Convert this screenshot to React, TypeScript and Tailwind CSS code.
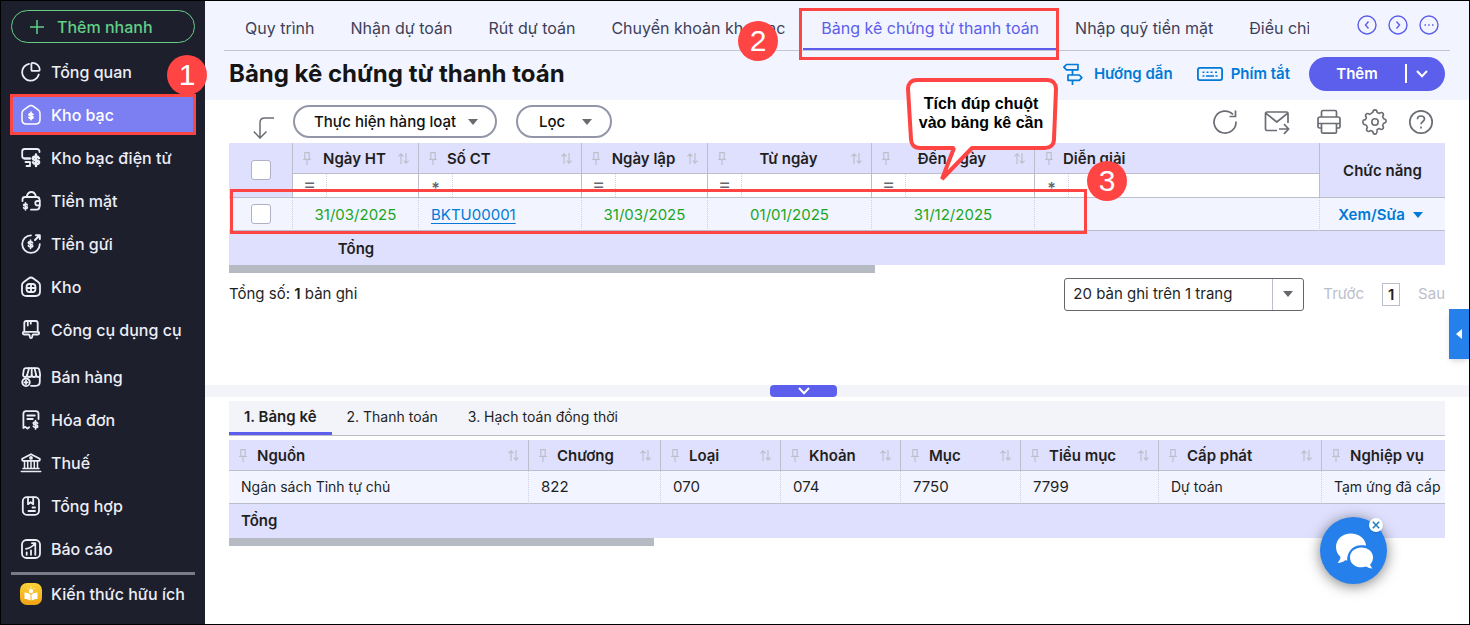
import React from 'react';
import clsx from 'clsx';

interface Column {
    label: string;
    width?: string;
    center?: boolean;
    operator?: string;
    noSort?: boolean;
}

const tabs = [
    'Quy trình',
    'Nhận dự toán',
    'Rút dự toán',
    'Chuyển khoản kho bạc',
    'Bảng kê chứng từ thanh toán',
    'Nhập quỹ tiền mặt',
    'Điều chỉnh',
];

const columns: Column[] = [
    { label: 'Ngày HT', width: 'w-[126px]', center: true, operator: '=' },
    { label: 'Số CT', width: 'w-[163px]', operator: '*' },
    { label: 'Ngày lập', width: 'w-[126px]', center: true, operator: '=' },
    { label: 'Từ ngày', width: 'w-[164px]', center: true, operator: '=' },
    { label: 'Đến ngày', width: 'w-[163px]', center: true, operator: '=' },
    { label: 'Diễn giải', operator: '*', noSort: true },
];

const detailTabs = ['1. Bảng kê', '2. Thanh toán', '3. Hạch toán đồng thời'];

const detailColumns: (Column & { value: string; numeric?: boolean })[] = [
    { label: 'Nguồn', width: 'w-[300px]', value: 'Ngân sách Tỉnh tự chủ' },
    { label: 'Chương', width: 'w-[132px]', value: '822', numeric: true },
    { label: 'Loại', width: 'w-[120px]', value: '070', numeric: true },
    { label: 'Khoản', width: 'w-[120px]', value: '074', numeric: true },
    { label: 'Mục', width: 'w-[120px]', value: '7750', numeric: true },
    { label: 'Tiểu mục', width: 'w-[138px]', value: '7799', numeric: true },
    { label: 'Cấp phát', width: 'w-[163px]', value: 'Dự toán' },
    { label: 'Nghiệp vụ', noSort: true, value: 'Tạm ứng đã cấp' },
];

/* ---------- sidebar icons, all on a 20x20 grid ---------- */

const MenuIcon = ({ children }: { children: React.ReactNode }) => (
    <svg
        viewBox="0 0 20 20"
        className="w-5 h-5 shrink-0 overflow-visible"
        fill="none"
        stroke="currentColor"
        strokeWidth="1.8"
        strokeLinecap="round"
        strokeLinejoin="round"
    >
        {children}
    </svg>
);

// dollar sign centred on 0,0
const Dollar = ({ x, y, s = 1 }: { x: number; y: number; s?: number }) => (
    <g transform={`translate(${x} ${y}) scale(${s})`}>
        <path d="M2.2-1.6C1.8-2.5 1-2.8 0-2.8c-1.3 0-2.3.5-2.3 1.4C-2.3.5 2.3-.5 2.3 1.4c0 .9-1 1.4-2.3 1.4-1 0-1.9-.4-2.3-1.3M0-4.3v8.6" />
    </g>
);

const menuGroups = [
    [
        {
            label: 'Tổng quan',
            icon: (
                <>
                    <path d="M8 1.8A8.500 8.500 0 1 0 17.800 12.500" />
                    <path d="M11.300.8a.9.9 0 0 0-.9.9v6.200c0 .6.4 1 1 1h6.300c.6 0 1-.4 1-.9 0-4.200-3.200-7.200-7.400-7.200z" />
                </>
            ),
        },
        {
            label: 'Kho bạc',
            active: true,
            icon: (
                <>
                    <path d="M1 8.300c0-1.500.6-2.600 1.800-3.400l4.800-3.500c1.500-1.100 3.300-1.100 4.800 0l4.800 3.500C18.400 5.700 19 6.800 19 8.300v6.200c0 2.800-1.700 4.500-4.500 4.500h-9C2.700 19 1 17.300 1 14.500z" strokeWidth="1.500" />
                    <Dollar x={10} y={11} s={0.9} />
                </>
            ),
        },
        {
            label: 'Kho bạc điện tử',
            icon: (
                <>
                    <path d="M18.500 4V3.500c0-1.500-1-2.500-2.500-2.500H3.700C2.200 1 1.200 2 1.200 3.500V8c0 1.500 1 2.500 2.500 2.500h5.800" />
                    <path d="M3.500 10.500h5M4.500 14h4.500v4H5.500" />
                    <Dollar x={15} y={12.300} s={1.350} />
                </>
            ),
        },
        {
            label: 'Tiền mặt',
            icon: (
                <>
                    <path d="M1.500 10V8.500c0-1.500 1-2.500 2.500-2.500h11.500c1.500 0 3 1 3 2.500v1.300M18.500 14.500v1c0 1.800-1.200 3.200-3 3.200H10" />
                    <path d="M5.500 5.800c1-3 2.500-4.800 4.800-4.800 2.300 0 4 1.800 4.700 4.800" />
                    <path d="M18.800 10h-2.300a2.200 2.200 0 0 0 0 4.400h2.300z" />
                    <Dollar x={4.500} y={15.300} s={0.85} />
                </>
            ),
        },
        {
            label: 'Tiền gửi',
            icon: (
                <>
                    <path d="M10 1.300a8.800 8.800 0 1 0 8.800 8.800" />
                    <path d="M14 6l4.500-4.500M15 1.200h3.800V5" strokeWidth="2" />
                    <Dollar x={9.500} y={10.300} s={0.95} />
                </>
            ),
        },
        {
            label: 'Kho',
            icon: (
                <>
                    <path d="M1 8.300c0-1.500.6-2.600 1.800-3.400l4.800-3.500c1.500-1.100 3.300-1.100 4.800 0l4.800 3.500C18.400 5.700 19 6.800 19 8.300v6.200c0 2.800-1.700 4.500-4.500 4.500h-9C2.700 19 1 17.300 1 14.500z" />
                    <rect x="5.600" y="7" width="8.800" height="8" rx="2.800" />
                    <path d="M10 7v8M5.600 11h8.800" />
                </>
            ),
        },
        {
            label: 'Công cụ dụng cụ',
            icon: (
                <>
                    <path d="M3.300 11.500V3c0-1.300.8-2 2-2h9.400c1.200 0 2 .7 2 2v8.500" />
                    <path d="M3 11.800h14c1 0 1.200.5 1.200 1.300 0 .9-.4 1.400-1.300 1.400h-4.400c-.8 0-1 .3-1.100 1-.1 1.300-.3 2.700-1.400 2.700s-1.300-1.400-1.400-2.700c-.1-.7-.3-1-1.100-1H3.100c-.9 0-1.300-.5-1.300-1.400 0-.8.200-1.300 1.200-1.300z" />
                    <path d="M6.800 1.200v4.300M9.800 1.200v2.500" />
                </>
            ),
        },
    ],
    [
        {
            label: 'Bán hàng',
            icon: (
                <>
                    <path d="M5 1.200h11c1.400 0 2.200.8 2.400 2.200l.7 4c.2 1.600-.6 2.600-1.900 2.600-1.200 0-2-.8-2-2 0 1.200-.9 2-2.200 2s-2.300-.8-2.300-2c0 1.200-1 2-2.300 2S6 9.200 6 8c0 1.200-.8 2-2 2-1.300 0-2.100-1-1.900-2.600l.6-4C2.900 2 3.700 1.200 5 1.200z" />
                    <path d="M8 1.200L6.200 8M10.700 1.200V8M13.500 1.200L15.200 8" />
                    <path d="M18.800 9.500v5.300c0 2.500-1.500 4-4 4H10" />
                    <circle cx="5" cy="15.300" r="3.800" />
                    <path d="M5 13.600v3.400M3.300 15.300h3.400" />
                </>
            ),
        },
        {
            label: 'Hóa đơn',
            icon: (
                <>
                    <path d="M17.500 9V3.800c0-1.600-1-2.600-2.600-2.600H5C3.400 1.200 2.400 2.200 2.400 3.800v14.300l2-1.300 2 1.800 1.800-1.300" />
                    <path d="M6.300 5.500h7.500M6.300 9h5.500" />
                    <Dollar x={14.500} y={14.800} s={0.95} />
                </>
            ),
        },
        {
            label: 'Thuế',
            icon: (
                <>
                    <path d="M1.200 7V5.800L10 1.200l8.800 4.600V7c0 .6-.3.900-.9.900H2.100c-.6 0-.9-.3-.9-.9z" />
                    <path d="M3.500 8v7M6.700 8v7M10 8v7M13.300 8v7M16.500 8v7M2 15.400h16M.3 18.500h19.400" strokeWidth="1.500" />
                    <circle cx="10" cy="4.900" r="1" />
                </>
            ),
        },
        {
            label: 'Tổng hợp',
            icon: (
                <>
                    <rect x="1.800" y="1.200" width="16.200" height="17.600" rx="4" />
                    <path d="M7 1.400v6.800l2.600-2 2.600 2V1.400M11.500 11.500H14M7.500 15H14" />
                </>
            ),
        },
        {
            label: 'Báo cáo',
            icon: (
                <>
                    <rect x="1" y="1" width="18" height="18" rx="4.500" />
                    <path d="M5.700 15.800v-2.500M10 15.800v-4.500M14.300 15.800V8.500M5 9.800c3.500-.5 6.500-2.300 9-5.300M11 4.200h3.300v3" />
                </>
            ),
        },
    ],
];

/* ---------- small shared drawings ---------- */

const PinIcon = () => (
    <svg viewBox="0 0 8 13" className="w-2 h-[13px] shrink-0" fill="none" stroke="#bdbfcc" strokeWidth="1.200">
        <path d="M1.800.6h4.400v6.700H1.800zM0 7.500h8M4 7.500V13" />
    </svg>
);

const SortIcon = () => (
    <svg viewBox="0 0 11 11" className="w-[11px] h-[11px] shrink-0" fill="none" stroke="#bdbfcc" strokeWidth="1.200">
        <path d="M3 11V1M.4 3.400L3 .8l2.600 2.600M8 0v10M5.900 7.600L8 10.200l2.600-2.600" />
    </svg>
);

const Caret = ({ className }: { className?: string }) => (
    <svg viewBox="0 0 10 6" className={clsx('w-[10px] h-[6px] shrink-0', className)} fill="currentColor">
        <path d="M0 0h10L5 6z" />
    </svg>
);

const Chevron = ({ className }: { className?: string }) => (
    <svg viewBox="0 0 12 8" className={clsx('w-3 h-2', className)} fill="none" stroke="currentColor" strokeWidth="2">
        <path d="M1 1l5 5.200L11 1" />
    </svg>
);

const StepBadge = ({ step, className }: { step: number; className: string }) => (
    <span
        className={clsx(
            "absolute z-20 flex items-center justify-center w-10 h-10 rounded-full bg-[#ff4444] text-white text-[30px] leading-none font-['Liberation_Sans',sans-serif]",
            className
        )}
    >
        {step}
    </span>
);

const HeaderCell = ({ col }: { col: Column }) => (
    <div className="flex items-center h-[30px] pl-[10px] pr-[9px] gap-[10px]">
        <PinIcon />
        <span className={clsx('flex-1 pt-0.5 whitespace-nowrap', col.center ? 'text-center' : 'text-left')}>{col.label}</span>
        {!col.noSort && <SortIcon />}
    </div>
);

const Checkbox = ({ label }: { label: string }) => (
    <input
        type="checkbox"
        aria-label={label}
        className="block mx-auto appearance-none w-5 h-5 bg-white border border-[#afb2c4] rounded-[3px]"
    />
);

const Sidebar = () => (
    <aside className="relative w-[204px] shrink-0 bg-[#1e1f2d] px-[10px] pt-[9px] text-base font-medium">
        <button className="flex items-center w-full h-[33px] pl-[18px] gap-[13px] border border-[#66ce87] rounded-full text-[#62cf87]">
            <svg viewBox="0 0 14 14" className="w-[14px] h-[14px]" stroke="currentColor" strokeWidth="1.500">
                <path d="M7 0v14M0 7h14" />
            </svg>
            Thêm nhanh
        </button>
        <nav className="flex flex-col gap-1 mt-[7px]">
            {menuGroups.map((group, i) => (
                <ul key={i}>
                    {group.map((item) => (
                        <li key={item.label} className="relative flex items-center h-[43px]">
                            <a
                                href="#"
                                className={clsx(
                                    'flex items-center w-full h-9 pl-[10px] gap-[10px] whitespace-nowrap',
                                    'active' in item ? 'bg-[#7b7ff2] text-white' : 'text-[#eceef6]'
                                )}
                            >
                                <MenuIcon>{item.icon}</MenuIcon>
                                <span className="pt-px">{item.label}</span>
                            </a>
                            {'active' in item && (
                                <>
                                    <span className="absolute inset-x-[-1px] inset-y-px border-3 border-[#ff4444]" />
                                    <StepBadge step={1} className="-top-[38px] left-[156px]" />
                                </>
                            )}
                        </li>
                    ))}
                </ul>
            ))}
        </nav>
        <hr className="mt-0.5 border-0 h-[3px] bg-[#797b88]" />
        <a href="#" className="flex items-center h-[38px] pl-[9px] gap-[9px] text-[#eceef6] whitespace-nowrap">
            <svg viewBox="0 0 22 22" className="w-[22px] h-[22px] shrink-0">
                <defs>
                    <linearGradient id="book" x1="0" y1="0" x2="0" y2="1">
                        <stop offset="0" stopColor="#fbd338" />
                        <stop offset="1" stopColor="#f0a312" />
                    </linearGradient>
                </defs>
                <rect width="22" height="22" rx="7" fill="url(#book)" />
                <path d="M4.500 9.500c2.500 0 4.500.8 6 2v6c-1.500-1-3.500-1.600-6-1.600zM17.500 9.500c-2.500 0-4.500.8-6 2v6c1.500-1 3.500-1.600 6-1.600z" fill="#fff" />
                <circle cx="11" cy="8" r="2.200" fill="#fff" />
                <path d="M11 3.500v1.200M7.500 5l.8.9M14.500 5l-.8.9" stroke="#fff" strokeWidth="1" />
            </svg>
            Kiến thức hữu ích
        </a>
    </aside>
);

const Header = () => (
    <header className="bg-[#f2f5ff]">
        <div className="flex items-start h-[50px] mx-[19px] border-b border-[#c3c5d6]">
            <div className="relative flex-1 min-w-0 h-[50px]">
                <nav className="flex h-full pl-[3px] overflow-hidden">
                    {tabs.map((tab) => {
                        const active = tab === 'Bảng kê chứng từ thanh toán';
                        return (
                            <a
                                key={tab}
                                href="#"
                                className={clsx(
                                    'h-[49px] px-[18px] pt-[15px] text-base leading-6 whitespace-nowrap',
                                    active ? 'text-[#5c5eea] border-b-2 border-[#5c5eea]' : 'text-[#3d4058]'
                                )}
                            >
                                {tab}
                            </a>
                        );
                    })}
                </nav>
                <span className="absolute left-[575px] top-[7px] w-[260px] h-[52px] border-3 border-[#ff4444] z-10" />
                <StepBadge step={2} className="left-[514px] top-5" />
            </div>
            <div className="flex gap-[11px] ml-12 mr-[11px] mt-[14px] text-[#5c5eea]">
                {[
                    { name: 'Trước', d: 'M11.500 6.500L8.500 10l3 3.500' },
                    { name: 'Sau', d: 'M8.500 6.500l3 3.500-3 3.500' },
                    { name: 'Khác', d: 'M5.500 10h1.500M9.200 10h1.500M13 10h1.500' },
                ].map((btn) => (
                    <button key={btn.name} aria-label={btn.name}>
                        <svg viewBox="0 0 20 20" className="w-5 h-5" fill="none" stroke="currentColor" strokeWidth="1.400">
                            <circle cx="10" cy="10" r="9" />
                            <path d={btn.d} />
                        </svg>
                    </button>
                ))}
            </div>
        </div>

        <div className="flex items-center h-[49px] mx-6 pb-1 text-[#007ad6] text-[15px] font-semibold">
            <h1 className="flex-1 text-2xl leading-none font-bold text-[#151515] whitespace-nowrap">Bảng kê chứng từ thanh toán</h1>
            <a href="#" className="flex items-center gap-[11px] mr-6 whitespace-nowrap">
                <svg viewBox="0 0 20 22" className="w-5 h-[22px]" fill="none" stroke="currentColor" strokeWidth="1.700" strokeLinejoin="round">
                    <path d="M3.500 1.500H15v5.300H3.500L.9 4.200zM5 12h11.300l2.500 2.600-2.500 2.700H5zM9.500 6.800V12M9.500 17.300V22" />
                </svg>
                <span className="pt-0.5">Hướng dẫn</span>
            </a>
            <a href="#" className="flex items-center gap-2 mr-[19px] whitespace-nowrap">
                <svg viewBox="0 0 26 14" className="w-[26px] h-[14px]" fill="none" stroke="currentColor" strokeWidth="1.800">
                    <rect x=".9" y=".9" width="24.200" height="12.200" rx="2" />
                    <path d="M5.500 5.300h2M9.500 5.300h2M13.500 5.300h2M18 5.300h2M5.500 9h2M9 9h8M18.500 9h2" strokeWidth="1.500" />
                </svg>
                <span className="pt-0.5">Phím tắt</span>
            </a>
            <div className="flex items-center w-[136px] h-[34px] rounded-full bg-[#5c5fec] text-white">
                <button className="flex-1 h-full pt-0.5">Thêm</button>
                <span className="w-0.5 h-[19px] bg-white" />
                <button aria-label="Thêm lựa chọn" className="flex items-center h-full pl-[9px] pr-[17px]">
                    <Chevron />
                </button>
            </div>
        </div>
    </header>
);

const Toolbar = () => (
    <div className="flex items-center h-[43px] px-6 text-[15px] font-medium text-[#111111]">
        <svg viewBox="0 0 22 22" className="w-[22px] h-[22px] ml-6 mt-3 mr-[18px]" fill="none" stroke="#6b6d74" strokeWidth="1.500">
            <path d="M21 1h-9c-3 0-5 1.500-5 4.500V21M.8 14.500L7 21l6.500-6.500" />
        </svg>
        <button className="flex items-center justify-between w-[204px] h-[33px] pl-[19px] pr-[17px] border-2 border-[#9296a8] rounded-full whitespace-nowrap">
            <span className="pt-0.5">Thực hiện hàng loạt</span>
            <Caret className="text-[#6a6b70]" />
        </button>
        <button className="flex items-center justify-between w-24 h-[33px] ml-[19px] pl-[21px] pr-[18px] border-2 border-[#9296a8] rounded-full">
            <span className="pt-0.5">Lọc</span>
            <Caret className="text-[#6a6b70]" />
        </button>
        <div className="flex items-center gap-5 ml-auto mr-[11px] text-[#6b6d74]">
            <button aria-label="Tải lại">
                <svg viewBox="0 0 26 26" className="w-[26px] h-[26px]" fill="none" stroke="currentColor" strokeWidth="1.700">
                    <path d="M24 12.500A11 11 0 1 1 21 5.500M23.500 1.500v6h-6" />
                </svg>
            </button>
            <button aria-label="Gửi email" className="ml-[6px]">
                <svg viewBox="0 0 26 26" className="w-[26px] h-[26px]" fill="none" stroke="currentColor" strokeWidth="1.700" strokeLinejoin="round">
                    <path d="M13 21.500H3c-.9 0-1.500-.6-1.500-1.500V4.500C1.500 3.700 2 3 3 3h19.500c.9 0 1.500.7 1.500 1.500V14M1.800 4.200L12.800 13 23.800 4.200M15 20h9.500M20 15.200l4.700 4.800-4.700 4.800" />
                </svg>
            </button>
            <button aria-label="In" className="ml-[6px]">
                <svg viewBox="0 0 26 26" className="w-[26px] h-[26px]" fill="none" stroke="currentColor" strokeWidth="1.700" strokeLinejoin="round">
                    <path d="M5.500 8V3c0-.8.600-1.500 1.500-1.500h12c.9 0 1.500.7 1.500 1.500v5M5.500 19H3.700c-1.200 0-1.700-.7-1.700-1.700V10c0-1.200.8-2 2-2h18c1.200 0 2 .8 2 2v7.300c0 1-.5 1.700-1.700 1.700h-1.800M5.500 14.500h15v8.200c0 .8-.6 1.500-1.500 1.500H7c-.9 0-1.500-.7-1.500-1.500zM2 14.500h22" />
                </svg>
            </button>
            <button aria-label="Thiết lập">
                <svg viewBox="0 0 26 26" className="w-[26px] h-[26px]" fill="none" stroke="currentColor" strokeWidth="1.600" strokeLinejoin="round">
                    <path d="M10.800 3.400C11 1.500 11.500 .9 13 .9s2 .6 2.200 2.500l2.300 1c1.500-1.200 2.300-1.300 3.300-.2 1.100 1 1 1.800-.2 3.300l1 2.300c1.900.2 2.500.7 2.500 2.200s-.6 2-2.500 2.200l-1 2.300c1.200 1.500 1.300 2.300.2 3.300-1 1.100-1.800 1-3.300-.2l-2.300 1C15 24.500 14.500 25.100 13 25.100s-2-.6-2.200-2.500l-2.300-1c-1.500 1.200-2.300 1.300-3.300.2-1.100-1-1-1.800.2-3.300l-1-2.300C2.500 16 .9 15.500.9 13s.6-2 2.500-2.200l1-2.300C3.200 7 3.100 6.200 4.200 5.200c1-1.100 1.800-1 3.300.2z" />
                    <circle cx="13" cy="13" r="3.200" />
                </svg>
            </button>
            <button aria-label="Trợ giúp">
                <svg viewBox="0 0 26 26" className="w-[26px] h-[26px]" fill="none" stroke="currentColor" strokeWidth="1.700">
                    <circle cx="13" cy="13" r="11.200" />
                    <path d="M9.500 10.200c0-2 1.500-3.200 3.500-3.200s3.500 1.200 3.500 3c0 2.500-3.500 2.500-3.500 5.300M13 17.500v2" />
                </svg>
            </button>
        </div>
    </div>
);

const VoucherTable = () => {
    const line = 'border-b border-[#bcbecb]';
    const solid = 'border-r border-r-[#bcbecb]';
    const dotted = 'border-r border-r-[#cfd2de] [border-right-style:dotted]';

    return (
        <div className="relative mx-6">
            <table className="w-full table-fixed border-separate border-spacing-0 text-[15px] text-[#1f1f1f]">
                <colgroup>
                    <col className="w-16" />
                    {columns.map((col) => (
                        <col key={col.label} className={col.width} />
                    ))}
                    <col className="w-[125px]" />
                </colgroup>
                <thead className="bg-[#dfe0fd]">
                    <tr>
                        <th rowSpan={2} className={clsx('p-0', line, solid)}>
                            <Checkbox label="Chọn tất cả" />
                        </th>
                        {columns.map((col) => (
                            <th key={col.label} className={clsx('p-0 font-semibold', line, solid)}>
                                <HeaderCell col={col} />
                            </th>
                        ))}
                        <th rowSpan={2} className={clsx('p-0 pt-0.5 font-semibold', line)}>Chức năng</th>
                    </tr>
                    <tr className="bg-white">
                        {columns.map((col) => (
                            <td key={col.label} className={clsx('p-0', line, solid)}>
                                <div className="flex h-[23px]">
                                    <span
                                        className={clsx(
                                            'flex justify-center w-[34px] h-full leading-none text-[#66676c] border-r border-dotted border-[#cfd2de]',
                                            col.operator === '*' ? 'pt-[6px] text-base font-semibold' : 'text-xl'
                                        )}
                                    >
                                        {col.operator}
                                    </span>
                                    <input aria-label={`Lọc ${col.label}`} className="flex-1 min-w-0 px-2 outline-none" />
                                </div>
                            </td>
                        ))}
                    </tr>
                </thead>
                <tbody>
                    <tr className="h-[33px] bg-[#f2f5ff] text-center text-[#1aa51f]">
                        <td className={clsx('p-0', line, dotted)}>
                            <Checkbox label="Chọn BKTU00001" />
                        </td>
                        <td className={clsx('p-0 pt-0.5', line, dotted)}>31/03/2025</td>
                        <td className={clsx('p-0 pt-0.5 pl-3 text-left', line, dotted)}>
                            <a href="#" className="text-[#007ad6] underline underline-offset-3">BKTU00001</a>
                        </td>
                        <td className={clsx('p-0 pt-0.5', line, dotted)}>31/03/2025</td>
                        <td className={clsx('p-0 pt-0.5', line, dotted)}>01/01/2025</td>
                        <td className={clsx('p-0 pt-0.5', line, dotted)}>31/12/2025</td>
                        <td className={clsx('p-0', line, dotted)} />
                        <td className={clsx('p-0 pt-0.5 pr-1', line)}>
                            <button className="inline-flex items-center gap-2 text-[#007ad6] font-semibold">
                                Xem/Sửa
                                <Caret />
                            </button>
                        </td>
                    </tr>
                </tbody>
                <tfoot>
                    <tr className="h-[34px] bg-[#dfe0fd] font-semibold text-center">
                        <td className="p-0" />
                        <td className="p-0 pt-0.5">Tổng</td>
                        <td colSpan={6} className="p-0" />
                    </tr>
                </tfoot>
            </table>
            <div className="h-2">
                <div className="w-[646px] h-full bg-[#b6bac3]" />
            </div>

            {/* row marker */}
            <span className="absolute left-px top-[46px] w-[857px] h-[45px] border-3 border-[#ff4444] pointer-events-none" />
            <StepBadge step={3} className="left-[858px] top-[18px]" />

            {/* speech bubble */}
            <div className="absolute left-[674px] -top-[67px] w-[156px] z-10">
                <svg viewBox="0 0 156 106" className="block w-full" fill="#fff" stroke="#ff4444" strokeWidth="4">
                    <path d="M14 4H144c6 0 9 4 9 9l-2 50c0 6-4 9-9 9H69L39 103 51 72H17c-6 0-9-4-9-9L5 13c0-5 3-9 9-9z" strokeLinejoin="bevel" />
                </svg>
                <p className="absolute inset-x-0 top-[18px] text-center text-base leading-[19px] font-bold text-black whitespace-nowrap font-['Liberation_Sans',sans-serif]">
                    Tích đúp chuột
                    <br />
                    vào bảng kê cần
                </p>
            </div>
        </div>
    );
};

const Pagination = () => (
    <div className="flex items-center h-[42px] mx-6 text-[15px] text-[#1f1f1f] whitespace-nowrap">
        <p className="mr-auto">
            Tổng số: <b className="font-semibold">1</b> bản ghi
        </p>
        <div className="relative w-60 h-[33px]">
            <select aria-label="Số bản ghi trên trang" className="appearance-none w-full h-full pl-2 bg-white border border-[#66676c] rounded-[3px]">
                <option>20 bản ghi trên 1 trang</option>
                <option>50 bản ghi trên 1 trang</option>
            </select>
            <span className="absolute right-px inset-y-px flex items-center justify-center w-[31px] border-l border-[#bcbecb] text-[#66676c] pointer-events-none">
                <Caret />
            </span>
        </div>
        <button className="ml-[19px] text-[#bcbecb]">Trước</button>
        <button className="w-[18px] h-[23px] mx-[18px] border border-[#bcbecb] font-semibold leading-none">1</button>
        <button className="text-[#bcbecb]">Sau</button>
    </div>
);

const DetailPanel = () => (
    <section className="mx-6 mt-1 text-[15px] text-[#1f1f1f]">
        <nav className="flex h-[35px] bg-[#f3f4f9] border-b border-[#bcbecb]">
            {detailTabs.map((tab, i) => (
                <button
                    key={tab}
                    className={clsx(
                        'h-[34px] px-[15px] whitespace-nowrap',
                        i === 0 ? 'pt-px font-semibold border-b-3 border-[#5c5fec]' : 'pb-0.5 text-sm'
                    )}
                >
                    {tab}
                </button>
            ))}
        </nav>
        <div className="mt-1 overflow-hidden">
            <table className="w-full table-fixed border-separate border-spacing-0">
                <colgroup>
                    {detailColumns.map((col) => (
                        <col key={col.label} className={col.width} />
                    ))}
                </colgroup>
                <thead className="bg-[#dfe0fd]">
                    <tr>
                        {detailColumns.map((col) => (
                            <th key={col.label} className="p-0 font-semibold border-b border-r border-[#bcbecb] last:border-r-0">
                                <HeaderCell col={col} />
                            </th>
                        ))}
                    </tr>
                </thead>
                <tbody>
                    <tr className="h-[33px] bg-[#f2f5ff]">
                        {detailColumns.map((col) => (
                            <td
                                key={col.label}
                                className={clsx(
                                    'p-0 pl-3 whitespace-nowrap border-b border-b-[#bcbecb] border-r border-r-[#cfd2de] [border-right-style:dotted] last:border-r-0',
                                    !col.numeric && 'text-sm'
                                )}
                            >
                                {col.value}
                            </td>
                        ))}
                    </tr>
                </tbody>
                <tfoot>
                    <tr className="h-[34px] bg-[#dfe0fd] font-semibold">
                        <td className="p-0 pl-3">Tổng</td>
                        <td colSpan={7} className="p-0" />
                    </tr>
                </tfoot>
            </table>
            <div className="w-[425px] h-2 bg-[#b6bac3]" />
        </div>
    </section>
);

const ChatButton = () => (
    <div className="absolute right-[82px] bottom-10 w-[67px] h-[67px]">
        <button aria-label="Trò chuyện" className="flex items-center justify-center w-full h-full rounded-full bg-[#2680eb] shadow-[0_2px_14px_rgba(0,0,0,0.5)]">
            <svg viewBox="0 0 38 36" className="w-[38px] h-9" fill="#fff">
                <path d="M16 .5C7.500.5 1 6.300 1 14c0 4 1.600 7.300 4.500 10-.3 2.300-1.300 4.200-3 5.800 3 0 5.500-.8 7.700-2.600l2 .3C11.800 20 17 12.800 25 12.300c2.200-.2 4-.2 6 .4C30.500 5.500 24 .5 16 .5z" />
                <path d="M26.500 14.500c-6.500 0-11.500 4.200-11.500 9.900s5 9.900 11.500 9.900c1.700 0 3.300-.2 4.700-.8 1.700 1.300 3.700 2 6.300 2-1.300-1.200-2-2.600-2.300-4.200 1.800-1.900 2.800-4.200 2.800-6.900 0-5.700-5-9.900-11.500-9.900z" />
            </svg>
        </button>
        <button aria-label="Đóng" className="absolute right-1 top-[1px] flex items-center justify-center w-[14px] h-[14px] rounded-full bg-white shadow">
            <svg viewBox="0 0 8 8" className="w-2 h-2" stroke="#1c7cc4" strokeWidth="1.500">
                <path d="M.8.8l6.400 6.400M7.200.8L.8 7.200" />
            </svg>
        </button>
    </div>
);

export default function App() {
    return (
        <div className="relative flex min-h-screen border border-black bg-white font-['Inter','Noto_Sans',sans-serif] overflow-hidden">
            <Sidebar />
            <main className="flex-1 min-w-0">
                <Header />
                <Toolbar />
                <VoucherTable />
                <Pagination />
                <div className="flex justify-center h-3 mt-[70px] pr-[67px] bg-[#f3f4f9]">
                    <button aria-label="Thu gọn" className="flex items-center justify-center w-[67px] h-full rounded bg-[#5c5fec] text-white">
                        <Chevron />
                    </button>
                </div>
                <DetailPanel />
            </main>
            <button aria-label="Mở rộng" className="absolute right-0 top-[308px] flex items-center justify-center w-5 h-[50px] bg-[#2680eb] text-white shadow-md">
                <Caret className="rotate-90" />
            </button>
            <ChatButton />
        </div>
    );
}
